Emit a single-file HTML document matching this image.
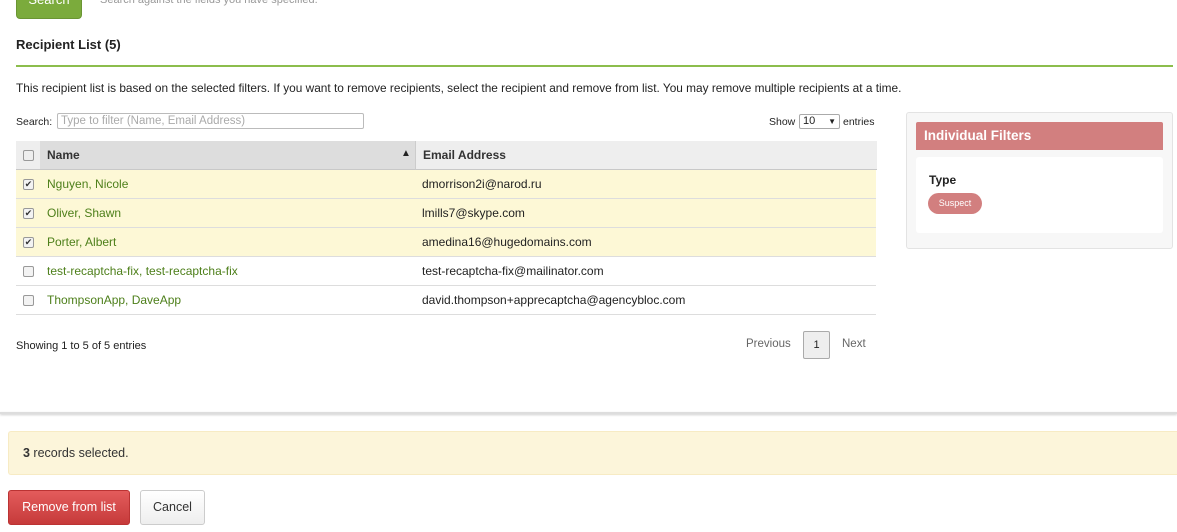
<!DOCTYPE html>
<html><head><style>
body{margin:0;width:1177px;height:532px;overflow:hidden;background:#fff;font-family:"Liberation Sans",sans-serif;color:#222;position:relative}
.a{position:absolute;white-space:nowrap}
.row{position:absolute;left:16px;width:860px;height:28px;border-bottom:1px solid #ddd;font-size:12px}
.row span{position:absolute;top:7px}
.cb{position:absolute;left:7px;top:9px;width:9px;height:9px;border:1px solid #999;border-radius:2px;background:#f3f3f3;font-size:9px;line-height:9px;text-align:center;color:#333}
</style></head><body>
<div class="a" style="left:16px;top:-14px;width:64px;height:31px;background:#7bab3c;border-radius:4px;border:1px solid #6a9533;color:#fff;font-size:13px;text-align:center;line-height:26px">Search</div>
<div class="a" style="left:100px;top:-6px;font-size:11px;color:#999">Search against the fields you have specified.</div>
<div class="a" style="left:16px;top:37px;font-size:13px;font-weight:bold">Recipient List (5)</div>
<div class="a" style="left:16px;top:65px;width:1157px;height:2px;background:#8cbd4c"></div>
<div class="a" style="left:16px;top:81px;font-size:11.85px">This recipient list is based on the selected filters. If you want to remove recipients, select the recipient and remove from list. You may remove multiple recipients at a time.</div>
<div class="a" style="left:16px;top:116px;font-size:10.5px">Search:</div>
<div class="a" style="left:57px;top:113px;width:302px;height:14px;border:1px solid #bbb;border-radius:2px;font-size:11.5px;color:#aaa;line-height:14px;padding-left:3px;box-sizing:content-box">Type to filter (Name, Email Address)</div>
<div class="a" style="left:769px;top:116px;font-size:10.5px">Show</div>
<div class="a" style="left:799px;top:114px;width:36px;height:13px;border:1px solid #aaa;border-radius:2px;font-size:11px;line-height:13px;padding-left:3px">10 <span style="position:absolute;right:3px;font-size:8px">▼</span></div>
<div class="a" style="left:843px;top:116px;font-size:10.5px">entries</div>
<div class="a" style="left:16px;top:141px;width:399px;height:28px;background:#ddd;border-bottom:1px solid #c8c8c8"></div>
<div class="a" style="left:16px;top:141px;width:24px;height:28px;background:#eee"></div>
<div class="cb" style="left:23px;top:150px;background:#eee"></div>
<div class="a" style="left:415px;top:141px;width:461px;height:28px;background:#eee;border-left:1px solid #ccc;border-bottom:1px solid #c8c8c8"></div>
<div class="a" style="left:47px;top:148px;font-size:12px;font-weight:bold;color:#333">Name</div>
<div class="a" style="left:401px;top:148px;font-size:10px">▲</div>
<div class="a" style="left:423px;top:148px;font-size:12px;font-weight:bold;color:#333">Email Address</div>
<div class="row" style="top:170px;background:#fdf8d6"><div class="cb">✔</div><span style="left:31px;color:#4d7f1a">Nguyen, Nicole</span><span style="left:406px">dmorrison2i@narod.ru</span></div>
<div class="row" style="top:199px;background:#fdf8d6"><div class="cb">✔</div><span style="left:31px;color:#4d7f1a">Oliver, Shawn</span><span style="left:406px">lmills7@skype.com</span></div>
<div class="row" style="top:228px;background:#fdf8d6"><div class="cb">✔</div><span style="left:31px;color:#4d7f1a">Porter, Albert</span><span style="left:406px">amedina16@hugedomains.com</span></div>
<div class="row" style="top:257px"><div class="cb"></div><span style="left:31px;color:#4d7f1a">test-recaptcha-fix, test-recaptcha-fix</span><span style="left:406px">test-recaptcha-fix@mailinator.com</span></div>
<div class="row" style="top:286px"><div class="cb"></div><span style="left:31px;color:#4d7f1a">ThompsonApp, DaveApp</span><span style="left:406px">david.thompson+apprecaptcha@agencybloc.com</span></div>
<div class="a" style="left:16px;top:340px;font-size:11px">Showing 1 to 5 of 5 entries</div>
<div class="a" style="left:746px;top:338px;font-size:11.5px;color:#666">Previous</div>
<div class="a" style="left:803px;top:331px;width:25px;height:26px;border:1px solid #aaa;border-radius:2px;background:#eee;font-size:11px;text-align:center;line-height:26px">1</div>
<div class="a" style="left:842px;top:338px;font-size:11.5px;color:#666">Next</div>
<div class="a" style="left:906px;top:112px;width:265px;height:135px;background:#f7f7f7;border:1px solid #e3e3e3;border-radius:3px"></div>
<div class="a" style="left:916px;top:122px;width:247px;height:28px;background:#d27f7f;border-radius:2px 2px 0 0;color:#fff;font-weight:bold;font-size:13.5px;line-height:28px;padding-left:8px;box-sizing:border-box">Individual Filters</div>
<div class="a" style="left:916px;top:157px;width:247px;height:76px;background:#fff;border-radius:3px"></div>
<div class="a" style="left:929px;top:173px;font-size:12px;font-weight:bold">Type</div>
<div class="a" style="left:928px;top:193px;width:54px;height:21px;background:#d27f7f;border-radius:11px;color:#fff;font-size:9px;text-align:center;line-height:21px">Suspect</div>
<div class="a" style="left:0;top:412px;width:1177px;height:2px;background:#ddd;box-shadow:0 1px 2px #ccc"></div>
<div class="a" style="left:8px;top:431px;width:1169px;height:44px;background:#fcf5da;border:1px solid #f7ebc4;border-right:none;border-radius:3px 0 0 3px;box-sizing:border-box"></div>
<div class="a" style="left:23px;top:446px;font-size:12.5px;color:#333"><b>3</b> records selected.</div>
<div class="a" style="left:8px;top:490px;width:122px;height:35px;background:linear-gradient(#e35c5c,#c63a3a);border:1px solid #b33;border-radius:3px;box-sizing:border-box;color:#fff;font-size:12.5px;text-align:center;line-height:33px">Remove from list</div>
<div class="a" style="left:140px;top:490px;width:65px;height:35px;background:linear-gradient(#fff,#eee);border:1px solid #ccc;border-radius:3px;box-sizing:border-box;color:#333;font-size:12.5px;text-align:center;line-height:33px">Cancel</div>
</body></html>
